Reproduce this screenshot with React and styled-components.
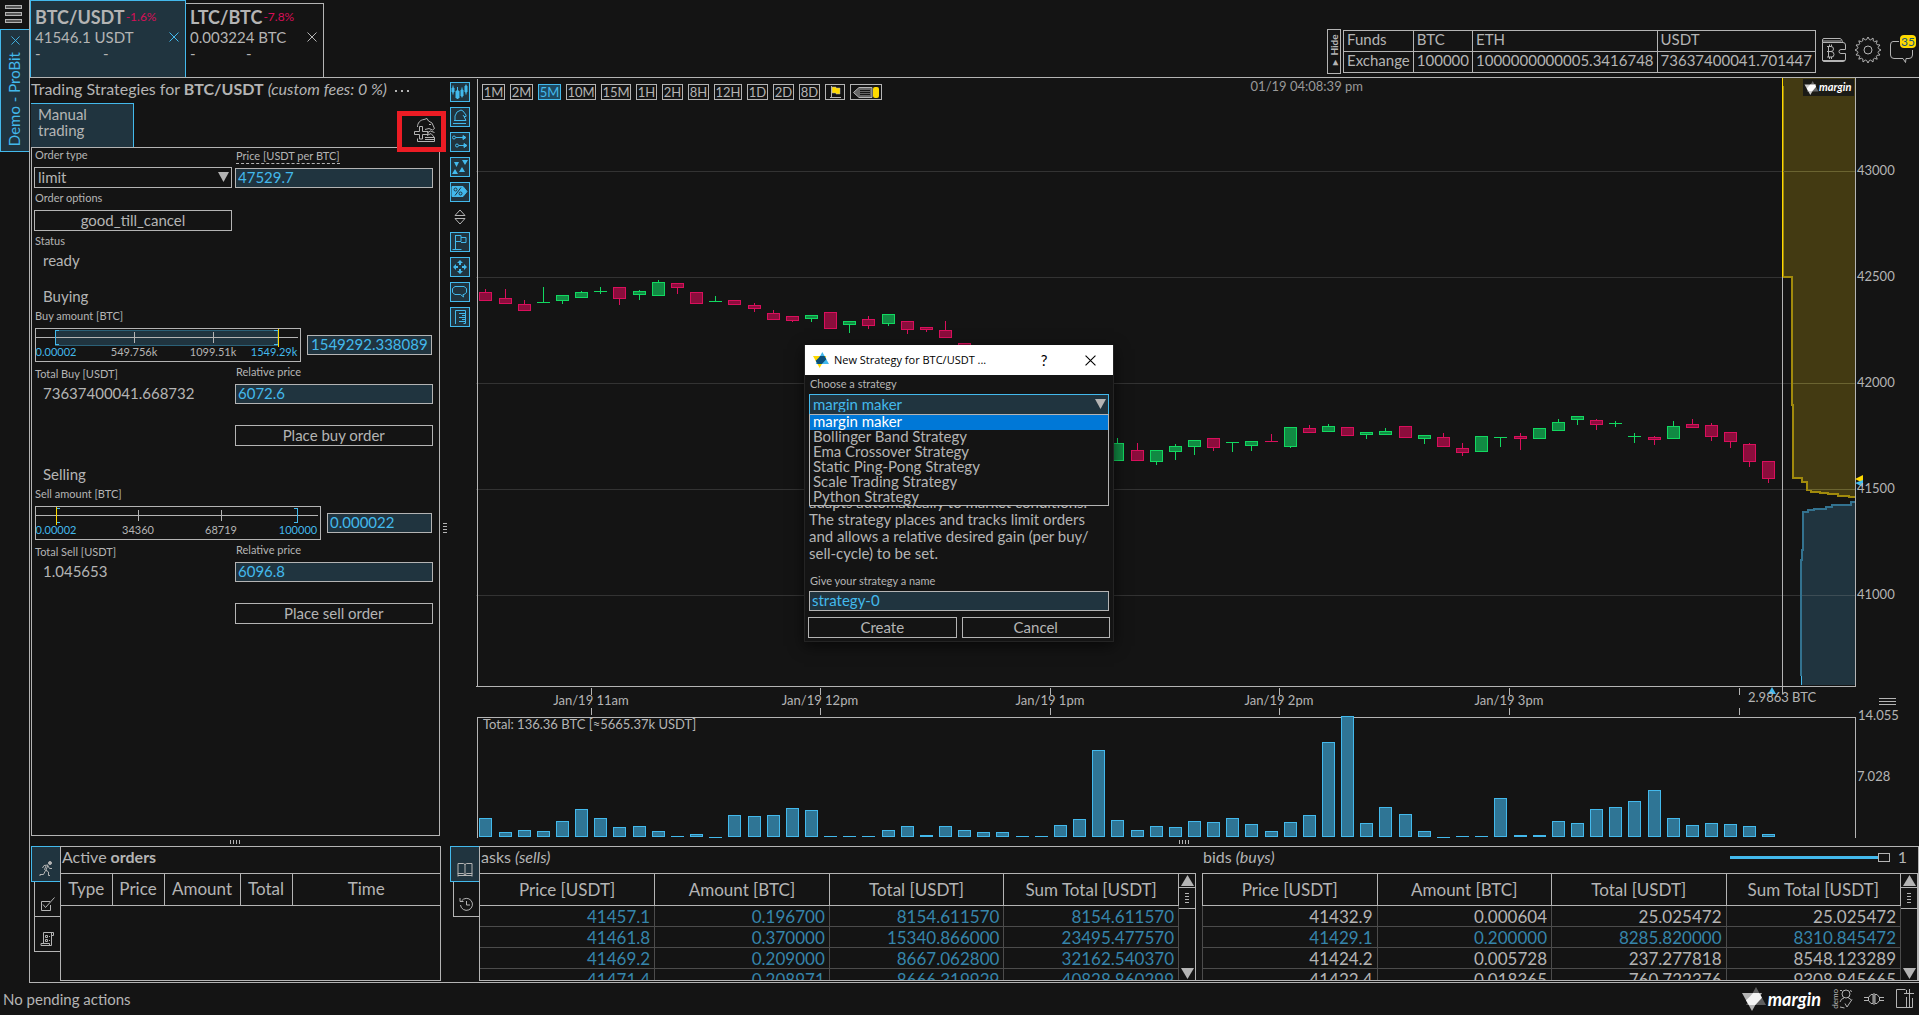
import React, { useState } from 'react'
import styled, { createGlobalStyle, ThemeProvider } from 'styled-components'

const theme = {
  bg: '#141414',
  line: '#b4b4b4',
  text: '#b4b4b4',
  blue: '#43b9ec',
  darkBlue: '#20343f',
  dimBlue: '#3685ab',
  grid: '#4c4c4c',
  yellow: '#fed900',
  pink: '#d60f58',
}

// [index, rising, high, body top, body bottom, low]
const candles = [
  [0, 0, 289, 292, 300, 300], [1, 0, 289, 298, 303, 303], [2, 0, 300, 304, 310, 310],
  [3, 1, 287, 302, 302, 302], [4, 1, 295, 295, 300, 303], [5, 1, 291, 292, 297, 297],
  [6, 1, 287, 291, 291, 293], [7, 0, 287, 287, 298, 304], [8, 1, 290, 291, 294, 299],
  [9, 1, 280, 282, 295, 295], [10, 0, 283, 283, 287, 293], [11, 0, 292, 292, 303, 303],
  [12, 1, 296, 301, 301, 301], [13, 0, 300, 300, 304, 304], [14, 0, 303, 305, 308, 311],
  [15, 0, 310, 313, 319, 319], [16, 0, 316, 316, 320, 321], [17, 1, 315, 315, 318, 321],
  [18, 0, 312, 312, 328, 328], [19, 1, 321, 321, 324, 332], [20, 0, 316, 319, 325, 328],
  [21, 1, 314, 314, 323, 325], [22, 0, 321, 321, 329, 333], [23, 0, 327, 327, 329, 331],
  [24, 0, 321, 330, 337, 337], [25, 0, 343, 343, 354, 354], [33, 1, 438, 443, 460, 460],
  [34, 0, 443, 450, 460, 460], [35, 1, 450, 450, 461, 464], [36, 1, 444, 446, 451, 459],
  [37, 1, 440, 440, 446, 454], [38, 0, 438, 438, 447, 450], [39, 1, 442, 442, 442, 451],
  [40, 1, 441, 441, 445, 450], [41, 0, 434, 441, 441, 441], [42, 1, 427, 427, 446, 447],
  [43, 0, 425, 428, 432, 432], [44, 1, 424, 426, 431, 431], [45, 0, 427, 427, 435, 435],
  [46, 1, 432, 432, 434, 438], [47, 1, 428, 431, 434, 434], [48, 0, 426, 426, 437, 437],
  [49, 1, 435, 435, 438, 443], [50, 0, 433, 437, 446, 446], [51, 0, 443, 448, 452, 455],
  [52, 1, 436, 436, 451, 451], [53, 1, 437, 437, 437, 446], [54, 0, 433, 436, 438, 449],
  [55, 1, 428, 428, 438, 438], [56, 1, 419, 422, 430, 430], [57, 1, 416, 416, 419, 424],
  [58, 0, 419, 420, 424, 429], [59, 1, 421, 423, 423, 426], [60, 1, 433, 436, 436, 442],
  [61, 0, 436, 437, 439, 444], [62, 1, 421, 426, 438, 438], [63, 0, 419, 424, 427, 427],
  [64, 0, 423, 425, 436, 440], [65, 0, 432, 432, 441, 447], [66, 0, 443, 444, 461, 466],
  [67, 0, 461, 461, 478, 482],
]

const volumes = [
  19, 5, 7, 6, 16, 28, 19, 10, 11, 6, 1, 3, 0, 22, 21, 22, 29, 27, 1, 1, 1, 7, 11, 2, 11, 7, 5, 5,
  1, 1, 12, 18, 87, 17, 7, 11, 10, 16, 15, 19, 13, 6, 15, 22, 95, 121, 14, 30, 23, 6, 0, 1, 1, 39,
  2, 2, 16, 14, 28, 30, 36, 47, 19, 12, 14, 13, 11, 3,
]

const priceLevels = [
  [171, '43000'], [277, '42500'], [383, '42000'], [489, '41500'], [595, '41000'],
]

const hours = [
  [591, 'Jan/19 11am'], [820, 'Jan/19 12pm'], [1050, 'Jan/19 1pm'],
  [1279, 'Jan/19 2pm'], [1509, 'Jan/19 3pm'], [1739, ''],
]

const asks = [
  ['41457.1', '0.196700', '8154.611570', '8154.611570'],
  ['41461.8', '0.370000', '15340.866000', '23495.477570'],
  ['41469.2', '0.209000', '8667.062800', '32162.540370'],
  ['41471.4', '0.208971', '8666.319929', '40828.860299'],
]

const bids = [
  ['41432.9', '0.000604', '25.025472', '25.025472'],
  ['41429.1', '0.200000', '8285.820000', '8310.845472'],
  ['41424.2', '0.005728', '237.277818', '8548.123289'],
  ['41422.4', '0.018365', '760.722376', '9308.845665'],
]

// [label, button width]
const intervals = [
  ['1M', 23], ['2M', 23], ['5M', 23], ['10M', 30], ['15M', 30], ['1H', 21],
  ['2H', 21], ['8H', 21], ['12H', 28], ['1D', 21], ['2D', 21], ['8D', 21],
]

const strategies = [
  'margin maker', 'Bollinger Band Strategy', 'Ema Crossover Strategy',
  'Static Ping-Pong Strategy', 'Scale Trading Strategy', 'Python Strategy',
]

const slotX = (i) => Math.round(485.4 + i * 19.15)

const CloseX = ({ size = 10 }) => (
  <Icon width={size} height={size} viewBox="0 0 10 10">
    <path d="M.5.5l9 9M9.5.5l-9 9" />
  </Icon>
)

const AddHorse = () => (
  <Icon width="22" height="25" viewBox="0 0 22 25">
    <path d="M3.500 9C3.500 5 6 2 10 1.500L13 .5L14.500 3L18 5L20.500 10.500L18.500 12L15 10.500L11 11.500M15 6.500h2M20.500 14.500L16.500 13L13 15M13 17.500L17 15.500L20.500 19.500M11 19.500H20.500V23.500H3.500V20.500M11 21.500H20" />
    <path d="M5.500 8.500H8.500V13.500H14V16.500H8.500V21H5.500V16.500H.5V13.500H5.500Z" />
  </Icon>
)

const toolIcons = [
  ['Candles', <g key="i"><path fill="currentColor" d="M1 5h2v4H1zM5 8h3v7H5zM10 7h2v6h-2zM14 3h2v6h-2z" /><path d="M2 2.5v9M6.500 4v12M11 4.500v10M15 1.500v10" /></g>],
  ['Strategies', <path key="i" d="M4 12.500V8L6 4l4-2 2 1 3 4v1.500h-2L12 7M13 8.500l2 4H3M2 15.500h13" />],
  ['Orders', <g key="i"><circle cx="3" cy="4.500" r="1.500" /><circle cx="6" cy="12.500" r="1.500" /><path d="M5 4.500h8M8 12.500h6" /><path fill="currentColor" d="M12 2.500l3 2-3 2zM13 10.500l3 2-3 2z" /></g>],
  ['Trades', <path key="i" fill="currentColor" stroke="none" d="M3 4h5l-2.500 5zM11 2h6l-3 5zM1 16h6l-3-5zM8 14h6l-3-5z" />],
  ['Percent', <g key="i"><path fill="currentColor" d="M1 3.500h11l4 5-4 5H1z" /><g stroke="#20343f"><circle cx="4.500" cy="6.500" r="1.500" /><circle cx="9.500" cy="10.500" r="1.500" /><path d="M10 4.500l-6 8" /></g></g>],
  ['Resize'],
  ['Flags', <g key="i"><path d="M1.500 16.500h9M4.500 16V2" /><path d="M5 2.500h5v6H5M10 4.500h5v5h-5" /></g>],
  ['Move', <path key="i" fill="currentColor" stroke="none" d="M9 2l3 3h-2v2h-2V5h-2zM9 16l3-3h-2v-2h-2v2h-2zM2 9l3-3v2h2v2H5v2zM16 9l-3-3v2h-2v2h2v2z" />],
  ['Comments', <path key="i" d="M4 3.500h9l2.500 2v4l-2.500 2h-1l.5 2.500-3-2.500H4l-2.500-2v-4z" />],
  ['Ruler', <path key="i" d="M4.500 16V2.500h10V15.500h-2M14 5.500h-6M14 7.500h-3M14 9.500h-6M14 11.500h-3M14 13.500h-6" />],
]

const Logo = ({ size = 24, colors = ['#b4b4b4', '#5f5f5f', '#f4f4f4'] }) => (
  <svg width={size} height={size} viewBox="0 0 24 24" aria-hidden="true">
    <path fill={colors[0]} d="M0 6H20L10 24Z" />
    <path fill={colors[1]} d="M14 0L24 18H4Z" />
    <path fill={colors[2]} d="M10.700 6H17.300L20 10.800L13.300 18H6.700L4 13.200L8 9.500Z" />
  </svg>
)

const Chart = () => (
  <ChartSvg viewBox="476 78 1443 760">
    <g shapeRendering="crispEdges">
      {priceLevels.map(([y]) => (
        <path key={y} d={`M476 ${y}.5H1855`} stroke="#333" />
      ))}
      {candles.map(([i, up, high, top, bottom, low]) => (
        <g key={i} stroke={up ? '#12d860' : '#d90f5c'} fill={up ? '#118a43' : '#8b0d3c'}>
          <path d={`M${slotX(i)}.5 ${high}V${low + 1}`} />
          {top === bottom ? (
            <path d={`M${slotX(i) - 6} ${top}.5h13`} />
          ) : (
            <rect x={slotX(i) - 5.5} y={top + 0.5} width="12" height={bottom - top} />
          )}
        </g>
      ))}
      <path fill="#433a12" d="M1782 78V277H1792V405H1793V478H1802V482H1807V490H1811V492H1828V494H1838V496H1849V497H1855V78Z" />
      <path fill="none" stroke="#a18a0c" strokeWidth="2" d="M1782.500 86V277H1792V405H1793V478H1802V482H1807V490H1811V492H1820V493H1828V494H1838V496H1849V497H1855" />
      <path stroke="#fed900" d="M1782.500 78V277" />
      <path fill="#20343f" d="M1855 502H1851V505H1832V508H1826V509H1814V510H1808V512H1803V550H1802V560H1801V685H1855Z" />
      <path fill="none" stroke="#33728f" strokeWidth="2" d="M1855 502H1851V505H1832V507H1826V509H1814V510H1808V512H1803V550H1802V560H1801V676" />
      <path stroke="#43b9ec" d="M1801.500 676V685" />
      <path stroke="#6b6431" d="M1783 171.500H1855M1793 383.500H1855M1808 489.500H1855" />
      <path stroke="#3d4d55" d="M1802 595.500H1855" />
      <path stroke="#b4b4b4" d="M477.500 79V687M476 686.500H1856M1855.500 78V687M1782.500 277V694" fill="none" />
      <rect x="1803" y="79" width="51" height="17" fill="#1b1b16" />
      <path stroke="#b4b4b4" fill="none" d="M477.500 838V717.500H1855.500V838" />
      {volumes.map((v, i) =>
        v < 2 ? (
          <path key={i} stroke="#43b9ec" d={`M${slotX(i) - 6} ${837 - v}.5h13`} />
        ) : (
          <rect key={i} x={slotX(i) - 5.5} y={837.5 - v} width="12" height={v - 1} fill="#2f7595" stroke="#43b9ec" />
        )
      )}
      {hours.map(([x]) => (
        <path key={x} stroke="#b4b4b4" d={`M${x}.5 688v7M${x}.5 708v7`} />
      ))}
      <path stroke="#b4b4b4" d="M1879 698.500h17M1879 701.500h17M1879 704.500h17" />
    </g>
    <path fill="#fed900" d="M1855 479l8-4v8z" />
    <path fill="#43b9ec" d="M1855 483l8-3v7z" />
    <path fill="#43b9ec" d="M1772 687l4 7h-8z" />
    <g transform="translate(1804 81)">
      <svg width="15" height="14" viewBox="0 0 24 24">
        <path fill="#ccc" d="M0 6H20L10 24Z" />
        <path fill="#666" d="M14 0L24 18H4Z" />
        <path fill="#fff" d="M10 6H18L20 10L13 18H7L4 13Z" />
      </svg>
    </g>
    <ChartBrand x="1819" y="91">margin</ChartBrand>
    {priceLevels.map(([y, label]) => (
      <AxisText key={y} x="1857" y={y + 4}>{label}</AxisText>
    ))}
    {hours.map(([x, label]) => (
      <AxisText key={x} x={x} y="705" textAnchor="middle">{label}</AxisText>
    ))}
    <AxisText x="1748" y="702">2.9863 BTC</AxisText>
    <AxisText x="1858" y="720">14.055</AxisText>
    <AxisText x="1857" y="781">7.028</AxisText>
    <AxisText x="483" y="729">Total: 136.36 BTC [≈5665.37k USDT]</AxisText>
  </ChartSvg>
)

const AmountSlider = ({ label, width, value, start, end, filled, ticks, input, inputLabel }) => (
  <div>
    <Label as="span">{label}</Label>
    <SliderLine>
      <RangeBox>
        <svg width={width} height="32" viewBox={`0 0 ${width} 32`}>
          <g shapeRendering="crispEdges" fill="none" stroke="#b4b4b4">
            {filled && <rect x={start + 0.5} y="1.500" width={end - start} height="15" fill="#20343f" stroke="#2b6178" />}
            <path d={`M0 8.500H${width - 2}`} />
            {ticks.slice(1, 3).map(([x]) => <path key={x} d={`M${x}.5 3V14`} />)}
            <path stroke="#43b9ec" d={`M${start + 4} 1.500h-3.500v14h3.500`} />
            <path stroke="#43b9ec" d={filled ? `M${end - 3} 1.500h3.500M${end - 3} 15.500h3.500` : `M${end - 3} 1.500h3.500v14h-3.500`} />
          </g>
          {ticks.map(([x, text], i) => (
            <TickText key={text} x={x} y="27" $edge={i % 3 === 0}>{text}</TickText>
          ))}
        </svg>
        <Range type="range" aria-label={label} min="0" max={width - 1} defaultValue={value} />
      </RangeBox>
      <TextInput aria-label={inputLabel} defaultValue={input} $pad={filled ? 3 : 2} />
    </SliderLine>
  </div>
)

const Book = ({ name, rows, highlight }) => (
  <BookSide>
    <BookScroll>
      <BookTable aria-label={name}>
        <thead>
          <tr>
            <th>Price [USDT]</th>
            <th>Amount [BTC]</th>
            <th>Total [USDT]</th>
            <th>Sum Total [USDT]</th>
          </tr>
        </thead>
        <tbody>
          {rows.map((row, i) => (
            <BookRow key={row[0]} $blue={highlight(i)}>
              {row.map((cell, n) => <td key={n}>{cell}</td>)}
            </BookRow>
          ))}
        </tbody>
      </BookTable>
    </BookScroll>
    <ScrollBar>
      <ScrollButton aria-label="Scroll up">
        <svg width="13" height="11" viewBox="0 0 13 11"><path fill="currentColor" d="M6.500 0L13 11H0Z" /></svg>
      </ScrollButton>
      <Thumb><Grip $vertical /></Thumb>
      <ScrollButton aria-label="Scroll down">
        <svg width="13" height="11" viewBox="0 0 13 11"><path fill="currentColor" d="M6.500 11L13 0H0Z" /></svg>
      </ScrollButton>
    </ScrollBar>
  </BookSide>
)

const MarketTabItem = ({ pair, change, price, active }) => (
  <MarketTab $active={active}>
    <TabHead><b>{pair}</b><Change>{change}</Change></TabHead>
    <TabPrice>
      {price}
      <CloseButton aria-label={`Close ${pair}`}><CloseX /></CloseButton>
    </TabPrice>
    <TabDashes $active={active}><span>-</span><span>-</span></TabDashes>
  </MarketTab>
)

const App = () => {
  const [interval, setInterval] = useState('5M')
  const [strategy, setStrategy] = useState('margin maker')

  return (
    <ThemeProvider theme={theme}>
      <GlobalStyle />
      <Page>
        <Shell>
          <Rail>
            <MenuButton aria-label="Menu"><i /><i /><i /></MenuButton>
            <AccountTab>
              <CloseX size={9} />
              <span>Demo - ProBit</span>
            </AccountTab>
          </Rail>
          <Workspace>
            <TopBar>
              <MarketTabItem active pair="BTC/USDT" change="-1.6%" price="41546.1 USDT" />
              <MarketTabItem pair="LTC/BTC" change="-7.8%" price="0.003224 BTC" />
              <Spacer />
              <HideButton>▾ Hide</HideButton>
              <FundsTable>
                <tbody>
                  <tr><th>Funds</th><th>BTC</th><th>ETH</th><th>USDT</th></tr>
                  <tr><th>Exchange</th><td>100000</td><td>1000000000005.3416748</td><td>73637400041.701447</td></tr>
                </tbody>
              </FundsTable>
              <TopIcons>
                <IconButton aria-label="Wallet">
                  <Icon width="26" height="26" viewBox="0 0 26 26">
                    <path d="M1.500 5.500V3Q1.500 1.500 3 1.500H19Q21 1.500 21.500 5.500M1.500 4H20M1.500 5.500H22Q24.500 5.500 24.500 8V12.500H20Q18 12.500 18 14.500T20 16.500H24.500V22Q24.500 24.500 22 24.500H3Q1.500 24.500 1.500 23ZM1.500 23.500H24" />
                    <path d="M6 9.500H10Q12.500 9.500 12.500 12T10 14.500H6M10 14.500Q13 14.500 13 17.500T10 20H6M7.500 9.500V20M8.500 7.500V9.500M10.500 7.500V9.500M8.500 20V22M10.500 20V22" />
                  </Icon>
                </IconButton>
                <IconButton aria-label="Settings">
                  <Icon width="28" height="28" viewBox="0 0 28 28">
                    <circle cx="14" cy="14" r="4" />
                    <path d={gearPath} />
                  </Icon>
                </IconButton>
                <IconButton aria-label="Messages">
                  <Icon width="25" height="26" viewBox="0 0 25 26">
                    <path d="M10 4.500H4Q1.500 4.500 1.500 8V18Q1.500 21.500 5 21.500H14L16.500 25.500L17 21.500H20Q23.500 21.500 23.500 18V13" />
                  </Icon>
                  <Badge>35</Badge>
                </IconButton>
              </TopIcons>
            </TopBar>

            <Upper>
              <StrategyColumn>
                <PanelTitle>
                  Trading Strategies for <b>BTC/USDT</b> <em>(custom fees: 0 %)</em>
                  <DotsButton aria-label="More"><i /><i /><i /></DotsButton>
                </PanelTitle>
                <StrategyTabs>
                  <StrategyTab>Manual trading</StrategyTab>
                  <AddButton aria-label="New strategy"><AddHorse /></AddButton>
                </StrategyTabs>
                <Form onSubmit={(e) => e.preventDefault()}>
                  <TwoColumns>
                    <div>
                      <Label htmlFor="type">Order type</Label>
                      <SelectWrap>
                        <Select id="type" defaultValue="limit"><option>limit</option></Select>
                        <Arrow />
                      </SelectWrap>
                    </div>
                    <div>
                      <Label htmlFor="price"><Dashed>Price [USDT per BTC]</Dashed></Label>
                      <TextInput id="price" defaultValue="47529.7" />
                    </div>
                  </TwoColumns>
                  <TwoColumns>
                    <div>
                      <Label htmlFor="options">Order options</Label>
                      <Button id="options">good_till_cancel</Button>
                    </div>
                  </TwoColumns>
                  <div>
                    <Label as="span">Status</Label>
                    <Value>ready</Value>
                  </div>

                  <SectionTitle $gap={14}>Buying</SectionTitle>
                  <AmountSlider
                    label="Buy amount [BTC]" width={264} value={242} start={19} end={241} filled
                    ticks={[[20, '0.00002'], [98, '549.756k'], [177, '1099.51k'], [238, '1549.29k']]}
                    input="1549292.338089" inputLabel="Buy amount"
                  />
                  <TwoColumns>
                    <div>
                      <Label as="span">Total Buy [USDT]</Label>
                      <Value>73637400041.668732</Value>
                    </div>
                    <div>
                      <Label htmlFor="buyRelative">Relative price</Label>
                      <TextInput id="buyRelative" defaultValue="6072.6" />
                    </div>
                  </TwoColumns>
                  <ActionRow><Button>Place buy order</Button></ActionRow>

                  <SectionTitle $gap={17}>Selling</SectionTitle>
                  <AmountSlider
                    label="Sell amount [BTC]" width={284} value={20} start={20} end={261}
                    ticks={[[20, '0.00002'], [102, '34360'], [185, '68719'], [262, '100000']]}
                    input="0.000022" inputLabel="Sell amount"
                  />
                  <TwoColumns>
                    <div>
                      <Label as="span">Total Sell [USDT]</Label>
                      <Value>1.045653</Value>
                    </div>
                    <div>
                      <Label htmlFor="sellRelative">Relative price</Label>
                      <TextInput id="sellRelative" defaultValue="6096.8" />
                    </div>
                  </TwoColumns>
                  <ActionRow><Button>Place sell order</Button></ActionRow>
                </Form>
              </StrategyColumn>
              <ColumnSplit><Grip $vertical /></ColumnSplit>
              <ToolStrip>
                {toolIcons.map(([name, icon]) =>
                  icon ? (
                    <ToolButton key={name} aria-label={name}>
                      <Icon width="18" height="18" viewBox="0 0 18 18">{icon}</Icon>
                    </ToolButton>
                  ) : (
                    <ToolButton key={name} aria-label={name} $plain>
                      <Icon width="12" height="16" viewBox="0 0 12 16">
                        <path d="M6 1l5 5.500H1zM6 15l5-5.500H1z" />
                      </Icon>
                    </ToolButton>
                  )
                )}
              </ToolStrip>
              <ChartArea>
                <Chart />
                <ChartToolbar>
                  {intervals.map(([name, width]) => (
                    <IntervalButton
                      key={name} $width={width} $active={name === interval}
                      onClick={() => setInterval(name)}
                    >
                      {name}
                    </IntervalButton>
                  ))}
                  <IntervalButton $width={20} aria-label="Flag">
                    <svg width="15" height="14" viewBox="0 0 15 14">
                      <path fill="none" stroke="#b4b4b4" d="M3.500 1V12M2 12.500H13" />
                      <path fill="#fed900" stroke="#b4b4b4" strokeWidth=".5" d="M4 2H8V3H12V9H8V8H4Z" />
                    </svg>
                  </IntervalButton>
                  <IntervalButton $width={32} aria-label="Marker">
                    <svg width="29" height="13" viewBox="0 0 29 13">
                      <path fill="#666" stroke="#b4b4b4" d="M1.500 6.500L7 1.500H20V11.500H7Z" />
                      <path stroke="#141414" d="M8 4.500H18M8 6.500H18M8 8.500H18" />
                      <rect x="21" y="1" width="6" height="11" rx="2" fill="#fed900" />
                    </svg>
                  </IntervalButton>
                  <Clock>01/19 04:08:39 pm</Clock>
                </ChartToolbar>
              </ChartArea>
            </Upper>

            <RowSplit>
              <LeftHandle><Grip /></LeftHandle>
              <RightHandle><Grip /></RightHandle>
            </RowSplit>

            <Lower>
              <SideTabs>
                <SideTab $active aria-label="Active orders">
                  <Icon width="14" height="16" viewBox="0 0 14 16">
                    <circle cx="11" cy="2" r="1.500" fill="currentColor" />
                    <path d="M3.500 7L5 4.500L9 4L7 9L9.500 11V14.500H11M9 5L10.500 7.500H13M6.500 9.500L4.500 13.500H1V15M7 5L5.500 8.500L7.500 10" />
                  </Icon>
                </SideTab>
                <SideTab aria-label="Completed orders">
                  <Icon width="15" height="15" viewBox="0 0 15 15">
                    <path d="M10.500 8V13.500H1.500V4.500H10M3 7.500L5.500 10.500L14.500.5" />
                  </Icon>
                </SideTab>
                <SideTab aria-label="Log">
                  <Icon width="15" height="16" viewBox="0 0 15 16">
                    <path d="M3.500 12V1.500H13.500V4.500H11.500M11.500 2V14.500H1V12.500H9.500V14.500M5.500 4.500h2v2h-2zM5.500 8.500h2v2h-2zM9 5.500h1M9 9.500h1" />
                  </Icon>
                </SideTab>
              </SideTabs>
              <OrdersPanel>
                <SmallTitle>Active <b>orders</b></SmallTitle>
                <OrdersTable>
                  <thead>
                    <tr><th>Type</th><th>Price</th><th>Amount</th><th>Total</th><th>Time</th></tr>
                  </thead>
                </OrdersTable>
              </OrdersPanel>
              <SideTabs $second>
                <SideTab $active aria-label="Order book">
                  <Icon width="16" height="14" viewBox="0 0 16 14">
                    <path d="M1 .5H6.500L8 1.500L9.500.5H15V10.500H9.500L8 12.500L6.500 10.500H1ZM8 1V12M1 13.500V10M15 13.500V10M1 12.500H15" />
                  </Icon>
                </SideTab>
                <SideTab aria-label="Trade history">
                  <Icon width="15" height="15" viewBox="0 0 15 15">
                    <path d="M2.500 4A6 6 0 1 1 1.500 8M1 1V4.500H4.500M7.500 4V8H11" />
                  </Icon>
                </SideTab>
              </SideTabs>
              <BookPanel>
                <BookTitles>
                  <SmallTitle>asks <em>(sells)</em></SmallTitle>
                  <SmallTitle>
                    bids <em>(buys)</em>
                    <Grouping type="range" aria-label="Grouping" min="0" max="1" defaultValue="1" />
                    <output>1</output>
                  </SmallTitle>
                </BookTitles>
                <Books>
                  <Book name="asks" rows={asks} highlight={() => true} />
                  <Book name="bids" rows={bids} highlight={(i) => i === 1} />
                </Books>
              </BookPanel>
            </Lower>
          </Workspace>
        </Shell>

        <StatusBar>
          <span>No pending actions</span>
          <Spacer />
          <Logo />
          <Brand>margin</Brand>
          <IconButton aria-label="Demo account">
            <DemoText>demo</DemoText>
            <Icon width="14" height="20" viewBox="0 0 14 20">
              <circle cx="7" cy="5" r="4" />
              <path d="M1 1.500H3M11 1.500L13 2.500M9 8.500L12.500 11M1 13Q2 9.500 5 9M1 18L5.500 19M6 14.500L8 18L13 10.500" />
            </Icon>
          </IconButton>
          <IconButton aria-label="Connection">
            <Icon width="20" height="12" viewBox="0 0 20 12">
              <path d="M0 4.500H5M0 7.500H5M15 4.500H20M15 7.500H20M9 1.500H7L4.500 4.500V7.500L7 10.500H9ZM11 1.500H13L15.500 4.500V7.500L13 10.500H11ZM10 0V12" />
            </Icon>
          </IconButton>
          <IconButton aria-label="Layout">
            <Icon width="19" height="20" viewBox="0 0 19 20">
              <path d="M10.500.5H1.500V18.500H17.500V9M11.500 8V18M11.500 1V4M14.500 0V18M9 4.500H19" />
            </Icon>
          </IconButton>
        </StatusBar>
      </Page>

      <Dialog role="dialog" aria-label="New Strategy">
        <DialogBar>
          <Logo size={16} colors={['#fed900', '#43b9ec', '#0b4f7a']} />
          <DialogTitle>New Strategy for BTC/USDT ...</DialogTitle>
          <BarButton aria-label="Help">?</BarButton>
          <BarButton aria-label="Close"><CloseX size={11} /></BarButton>
        </DialogBar>
        <DialogBody>
          <Label htmlFor="strategy">Choose a strategy</Label>
          <SelectWrap>
            <Select id="strategy" $blue value={strategy} onChange={(e) => setStrategy(e.target.value)}>
              {strategies.map((name) => <option key={name}>{name}</option>)}
            </Select>
            <Arrow />
            <Options role="listbox" aria-label="Strategies">
              {strategies.map((name) => (
                <Option
                  key={name} role="option" aria-selected={name === strategy}
                  $selected={name === strategy} onClick={() => setStrategy(name)}
                >
                  {name}
                </Option>
              ))}
            </Options>
          </SelectWrap>
          <Description>
            adapts automatically to market conditions.<br />
            The strategy places and tracks limit orders<br />
            and allows a relative desired gain (per buy/<br />
            sell-cycle) to be set.
          </Description>
          <Label htmlFor="strategyName">Give your strategy a name</Label>
          <TextInput id="strategyName" defaultValue="strategy-0" />
          <DialogButtons>
            <Button>Create</Button>
            <Button>Cancel</Button>
          </DialogButtons>
        </DialogBody>
      </Dialog>
    </ThemeProvider>
  )
}

const gearPath = Array.from({ length: 48 }, (_, i) => {
  const angle = (i / 48) * Math.PI * 2
  const r = i % 3 === 0 ? 13 : 10.5
  return `${i ? 'L' : 'M'}${(14 + r * Math.cos(angle)).toFixed(1)} ${(14 + r * Math.sin(angle)).toFixed(1)}`
}).join('') + 'Z'

const Arrow = () => (
  <ArrowSvg width="11" height="10" viewBox="0 0 11 10">
    <path fill="#b4b4b4" d="M0 0H11L5.500 10Z" />
  </ArrowSvg>
)

const Grip = ({ $vertical }) => (
  <GripBox $vertical={$vertical}><i /><i /><i /><i /></GripBox>
)

const GlobalStyle = createGlobalStyle`
  * {
    box-sizing: border-box;
  }
  body {
    margin: 0;
    background: ${theme.bg};
    color: ${theme.text};
    font: 15px/18px Lato, sans-serif;
  }
  button, input, select {
    margin: 0;
    font: inherit;
    color: inherit;
    background: none;
    border: 0;
    border-radius: 0;
    padding: 0;
    outline: 0;
  }
  table {
    border-collapse: collapse;
  }
  th {
    font-weight: normal;
  }
`

const Icon = styled.svg`
  fill: none;
  stroke: currentColor;
  flex: none;
`

const Page = styled.div`
  display: flex;
  flex-direction: column;
  min-height: 100vh;
`

const Shell = styled.div`
  display: flex;
  flex: 1;
`

const Rail = styled.div`
  width: 29px;
  flex: none;
`

const MenuButton = styled.button`
  display: flex;
  flex-direction: column;
  gap: 3px;
  padding: 5px;
  height: 29px;

  i {
    width: 17px;
    height: 4px;
    border: 1px solid ${({ theme }) => theme.line};
    background: #555;
  }
`

const AccountTab = styled.div`
  display: flex;
  flex-direction: column;
  align-items: center;
  justify-content: space-between;
  height: 123px;
  padding: 6px 0 5px;
  border: 1px solid ${({ theme }) => theme.blue};
  border-right: 0;
  background: ${({ theme }) => theme.darkBlue};
  color: ${({ theme }) => theme.blue};

  span {
    writing-mode: vertical-rl;
    transform: rotate(180deg);
    margin-right: 3px;
  }
`

const Workspace = styled.div`
  flex: 1;
  min-width: 0;
  display: flex;
  flex-direction: column;
  border-left: 1px solid ${({ theme }) => theme.line};
  border-bottom: 1px solid ${({ theme }) => theme.line};
`

const TopBar = styled.header`
  display: flex;
  align-items: flex-end;
  height: 78px;
  border-bottom: 1px solid ${({ theme }) => theme.line};
`

const MarketTab = styled.div`
  width: ${({ $active }) => ($active ? 156 : 138)}px;
  height: ${({ $active }) => ($active ? 77 : 74)}px;
  padding: ${({ $active }) => ($active ? 5 : 2)}px 6px 0 4px;
  border: 1px solid ${({ theme, $active }) => ($active ? theme.blue : theme.line)};
  border-bottom: 0;
  border-left-width: ${({ $active }) => ($active ? 1 : 0)}px;
  background: ${({ theme, $active }) => ($active ? theme.darkBlue : theme.bg)};

  button {
    color: ${({ theme, $active }) => ($active ? theme.blue : theme.line)};
  }
`

const TabHead = styled.div`
  display: flex;
  align-items: center;
  font-size: 18px;
  line-height: 22px;
`

const Change = styled.span`
  margin-left: 1px;
  font-size: 12px;
  color: ${({ theme }) => theme.pink};
`

const TabPrice = styled.div`
  display: flex;
  justify-content: space-between;
  align-items: center;
`

const CloseButton = styled.button`
  display: flex;
`

const TabDashes = styled.div`
  display: flex;
  line-height: 14px;

  span {
    width: ${({ $active }) => ($active ? 68 : 56)}px;
  }
`

const Spacer = styled.div`
  flex: 1;
`

const HideButton = styled.button`
  writing-mode: vertical-rl;
  transform: rotate(180deg);
  width: 14px;
  height: 45px;
  margin: 0 2px 3px 0;
  border: 1px solid ${({ theme }) => theme.line};
  font-size: 10px;
  font-weight: bold;
  line-height: 12px;
`

const FundsTable = styled.table`
  margin-bottom: 4px;
  line-height: 17px;

  th, td {
    height: 21px;
    padding: 0 3px 3px;
    border: 1px solid ${({ theme }) => theme.line};
    text-align: left;
  }
`

const TopIcons = styled.div`
  display: flex;
  align-items: center;
  gap: 7px;
  height: 54px;
  padding: 0 5px;
`

const IconButton = styled.button`
  position: relative;
  display: flex;
  align-items: center;
`

const Badge = styled.span`
  position: absolute;
  top: -2px;
  right: -2px;
  padding: 0 1px;
  border-radius: 4px;
  background: ${({ theme }) => theme.yellow};
  color: #14577a;
  font-size: 12px;
  line-height: 13px;
`

const Upper = styled.div`
  display: flex;
  flex: 1;
`

const StrategyColumn = styled.section`
  display: flex;
  flex-direction: column;
  width: 410px;
  flex: none;
  padding: 0 0 2px 1px;
`

const PanelTitle = styled.div`
  height: 25px;
  font-size: 16px;
  line-height: 22px;
  white-space: nowrap;
`

const DotsButton = styled.button`
  display: inline-flex;
  gap: 4px;
  margin-left: 8px;
  vertical-align: middle;

  i {
    width: 2px;
    height: 2px;
    background: ${({ theme }) => theme.line};
  }
`

const StrategyTabs = styled.div`
  display: flex;
  justify-content: space-between;
  height: 44px;
`

const StrategyTab = styled.button`
  width: 103px;
  padding: 0 40px 8px 7px;
  border: 1px solid ${({ theme }) => theme.blue};
  border-width: 1px 1px 0 0;
  background: ${({ theme }) => theme.darkBlue};
  text-align: left;
  line-height: 16px;
`

const AddButton = styled.button`
  position: relative;
  display: flex;
  align-items: flex-end;
  margin-right: 4px;
  padding-bottom: 4px;

  /* highlight frame around the button */
  &::after {
    content: '';
    position: absolute;
    inset: 8px -10px -5px -17px;
    border: 5px solid #ec1c24;
  }
`

const Form = styled.form`
  flex: 1;
  display: flex;
  flex-direction: column;
  gap: 3px;
  padding: 0 6px 0 2px;
  border: 1px solid ${({ theme }) => theme.line};
`

const TwoColumns = styled.div`
  display: grid;
  grid-template-columns: 1fr 1fr;
  align-items: end;
  gap: 3px;
`

const Label = styled.label`
  display: block;
  padding: 0 0 5px 1px;
  font-size: 11px;
  line-height: 14px;
`

const Dashed = styled.span`
  padding-bottom: 1px;
  border-bottom: 1px dashed ${({ theme }) => theme.line};
`

const SelectWrap = styled.div`
  position: relative;
`

const Select = styled.select`
  appearance: none;
  display: block;
  width: 100%;
  height: 21px;
  padding: 0 0 2px 3px;
  border: 1px solid ${({ theme, $blue }) => ($blue ? theme.blue : theme.line)};
  background: ${({ theme, $blue }) => ($blue ? theme.darkBlue : theme.bg)};
  color: ${({ theme, $blue }) => ($blue ? theme.blue : theme.text)};
`

const ArrowSvg = styled.svg`
  position: absolute;
  top: 5px;
  right: 3px;
  pointer-events: none;
`

const TextInput = styled.input`
  display: block;
  width: 100%;
  height: 20px;
  padding: 0 ${({ $pad }) => $pad || 2}px 2px;
  border: 1px solid ${({ theme }) => theme.line};
  background: ${({ theme }) => theme.darkBlue};
  color: ${({ theme }) => theme.blue};
`

const Button = styled.button`
  display: block;
  width: 100%;
  height: 21px;
  padding-bottom: 2px;
  border: 1px solid ${({ theme }) => theme.line};
`

const Value = styled.div`
  padding: 0 0 4px 9px;
  line-height: 14px;
`

const SectionTitle = styled.div`
  margin-top: ${({ $gap }) => $gap}px;
  padding: 0 0 2px 9px;
  line-height: 16px;
`

const SliderLine = styled.div`
  display: flex;
  align-items: center;
  gap: 6px;
  padding: 0 1px;
`

const RangeBox = styled.div`
  display: grid;
  flex: none;
  border: 1px solid ${({ theme }) => theme.line};

  svg {
    grid-area: 1 / 1;
  }
`

const Range = styled.input`
  appearance: none;
  grid-area: 1 / 1;
  width: 100%;
  height: 18px;

  &::-webkit-slider-thumb {
    appearance: none;
    width: 1px;
    height: 18px;
    background: ${({ theme }) => theme.yellow};
  }
`

const TickText = styled.text`
  text-anchor: middle;
  font-size: 11px;
  fill: ${({ theme, $edge }) => ($edge ? theme.blue : theme.text)};
`

const ActionRow = styled.div`
  display: grid;
  width: 50%;
  margin-top: 18px;
  padding-left: 1px;
  align-self: flex-end;
`

const GripBox = styled.span`
  display: flex;
  flex-direction: ${({ $vertical }) => ($vertical ? 'column' : 'row')};
  gap: 2px;

  i {
    width: ${({ $vertical }) => ($vertical ? 4 : 1)}px;
    height: ${({ $vertical }) => ($vertical ? 1 : 4)}px;
    background: ${({ theme }) => theme.line};
  }
`

const ColumnSplit = styled.div`
  display: flex;
  align-items: center;
  justify-content: center;
  width: 10px;
  padding-bottom: 140px;
  padding-top: 280px;
`

const ToolStrip = styled.div`
  display: flex;
  flex-direction: column;
  gap: 5px;
  width: 20px;
  flex: none;
  padding-top: 4px;
`

const ToolButton = styled.button`
  display: flex;
  align-items: center;
  justify-content: center;
  width: 20px;
  height: 20px;
  border: ${({ $plain }) => ($plain ? 0 : 1)}px solid ${({ theme }) => theme.blue};
  background: ${({ theme, $plain }) => ($plain ? 'none' : theme.darkBlue)};
  color: ${({ theme, $plain }) => ($plain ? theme.line : theme.blue)};
`

const ChartArea = styled.section`
  position: relative;
  flex: 1;
  min-width: 0;
  padding-left: 6px;
`

const ChartSvg = styled.svg`
  display: block;
  width: 100%;
`

const AxisText = styled.text`
  font-size: 13px;
  fill: ${({ theme }) => theme.text};
`

const ChartBrand = styled.text`
  font-size: 11px;
  font-weight: bold;
  font-style: italic;
  fill: #fff;
`

/* floats over the drawing area */
const ChartToolbar = styled.div`
  position: absolute;
  top: 6px;
  left: 12px;
  right: 556px;
  display: flex;
  gap: 5px;
`

const IntervalButton = styled.button`
  display: flex;
  align-items: center;
  justify-content: center;
  width: ${({ $width }) => $width}px;
  height: 16px;
  border: 1px solid ${({ theme, $active }) => ($active ? theme.blue : theme.line)};
  background: ${({ $active }) => ($active ? '#1d4a61' : 'none')};
  color: ${({ theme, $active }) => ($active ? theme.blue : theme.text)};
  font-size: 13px;
  line-height: 14px;
`

const Clock = styled.time`
  margin-left: auto;
  font-size: 13px;
  line-height: 4px;
  color: #999;
`

const RowSplit = styled.div`
  display: flex;
  height: 8px;
  padding-top: 2px;
`

const LeftHandle = styled.div`
  display: flex;
  justify-content: center;
  width: 410px;
  margin-right: 9px;
`

const RightHandle = styled.div`
  display: flex;
  justify-content: center;
  flex: 1;
`

const Lower = styled.div`
  display: flex;
  height: 136px;
  padding-bottom: 1px;
`

const SideTabs = styled.div`
  display: flex;
  flex-direction: column;
  align-items: flex-end;
  width: 30px;
  flex: none;
  margin-left: ${({ $second }) => ($second ? 8 : 0)}px;
`

const SideTab = styled.button`
  display: flex;
  align-items: flex-end;
  justify-content: center;
  width: ${({ $active }) => ($active ? 29 : 26)}px;
  height: ${({ $active }) => ($active ? 36 : 35)}px;
  padding-bottom: 4px;
  border: 1px solid ${({ theme, $active }) => ($active ? theme.blue : theme.line)};
  border-width: ${({ $active }) => ($active ? '1px 0 1px 1px' : '0 0 1px 1px')};
  background: ${({ theme, $active }) => ($active ? theme.darkBlue : 'none')};
`

const OrdersPanel = styled.section`
  width: 381px;
  flex: none;
  border: 1px solid ${({ theme }) => theme.line};
`

const SmallTitle = styled.div`
  display: flex;
  flex: 1;
  align-items: center;
  gap: 4px;
  height: 26px;
  padding: 0 11px 6px 1px;
  font-size: 16px;

  output {
    margin-left: 4px;
  }
`

const OrdersTable = styled.table`
  width: 100%;
  font-size: 17px;

  th {
    height: 32px;
    padding: 0 0 1px;
    border: 1px solid ${({ theme }) => theme.line};
    width: 52px;
  }
  th:first-child {
    width: 51px;
    border-left: 0;
  }
  th:nth-child(3) {
    width: 76px;
  }
  th:last-child {
    width: auto;
    border-right: 0;
  }
`

const BookPanel = styled.section`
  flex: 1;
  min-width: 0;
  border: 1px solid ${({ theme }) => theme.line};
`

const BookTitles = styled.div`
  display: flex;
  gap: 6px;
`

const Grouping = styled.input`
  appearance: none;
  width: 160px;
  height: 10px;
  margin-left: auto;
  background: linear-gradient(${theme.blue}, ${theme.blue}) center / 100% 3px no-repeat;

  &::-webkit-slider-thumb {
    appearance: none;
    width: 12px;
    height: 9px;
    border: 1px solid ${({ theme }) => theme.line};
    background: ${({ theme }) => theme.bg};
  }
`

const Books = styled.div`
  display: flex;
  gap: 6px;
`

const BookSide = styled.div`
  display: flex;
  flex: 1;
  height: 107px;

  &:first-child th:first-child, &:first-child td:first-child {
    border-left: 0;
  }
`

const BookScroll = styled.div`
  flex: 1;
  overflow: hidden;
`

const BookTable = styled.table`
  width: 100%;
  table-layout: fixed;
  font-size: 17px;
  line-height: 19px;

  th {
    height: 32px;
    padding: 0;
    border: 1px solid ${({ theme }) => theme.line};
  }
`

const BookRow = styled.tr`
  color: ${({ theme, $blue }) => ($blue ? theme.dimBlue : theme.text)};

  td {
    height: 21px;
    padding: 1px 4px 0;
    border: 1px solid ${({ theme }) => theme.grid};
    text-align: right;
  }
`

const ScrollBar = styled.div`
  display: flex;
  flex-direction: column;
  width: 17px;
  border: 1px solid ${({ theme }) => theme.line};
  border-width: 1px 1px 0 0;

  button:last-child {
    margin-top: auto;
  }
`

const ScrollButton = styled.button`
  display: flex;
  align-items: center;
  justify-content: center;
  height: 13px;
`

const Thumb = styled.div`
  display: flex;
  align-items: center;
  justify-content: center;
  height: 22px;
  border: 1px solid ${({ theme }) => theme.line};
  border-width: 1px 0;
`

const StatusBar = styled.footer`
  display: flex;
  align-items: center;
  height: 32px;
  padding: 0 5px 0 3px;

  button {
    margin-left: 11px;
  }
`

const Brand = styled.span`
  margin-left: 2px;
  font-size: 18px;
  font-weight: bold;
  font-style: italic;
  color: #fff;
`

const DemoText = styled.span`
  writing-mode: vertical-rl;
  transform: rotate(180deg);
  font-size: 8px;
  line-height: 7px;
`

/* free window above the workspace */
const Dialog = styled.div`
  position: absolute;
  top: 345px;
  left: 804px;
  width: 310px;
  background: ${({ theme }) => theme.bg};
  border: 1px solid #242424;
  border-top: 0;
  box-shadow: 0 4px 14px rgba(0, 0, 0, 0.6);
`

const DialogBar = styled.div`
  display: flex;
  align-items: center;
  height: 30px;
  padding-left: 8px;
  background: #fff;
  color: #000;
`

const DialogTitle = styled.span`
  flex: 1;
  margin-left: 5px;
  font-family: 'Open Sans', sans-serif;
  font-size: 11px;
  white-space: nowrap;
`

const BarButton = styled.button`
  display: flex;
  justify-content: center;
  width: 46px;
`

const DialogBody = styled.div`
  padding: 0 4px 3px;

  label {
    padding: 2px 0 3px 1px;
  }
`

const Options = styled.ul`
  position: absolute;
  top: 20px;
  left: 0;
  right: 0;
  margin: 0;
  padding: 0;
  border: 1px solid ${({ theme }) => theme.line};
  background: ${({ theme }) => theme.bg};
  list-style: none;
`

const Option = styled.li`
  height: 15px;
  padding-left: 3px;
  line-height: 13px;
  background: ${({ $selected }) => ($selected ? '#0078d7' : 'none')};
  color: ${({ theme, $selected }) => ($selected ? '#fff' : theme.text)};
`

const Description = styled.p`
  margin: 79px 0 10px;
  line-height: 17px;
  white-space: nowrap;
`

const DialogButtons = styled.div`
  display: grid;
  grid-template-columns: 1fr 1fr;
  gap: 5px;
  padding-top: 6px;
  margin: 0 -1px;
`

export default App
